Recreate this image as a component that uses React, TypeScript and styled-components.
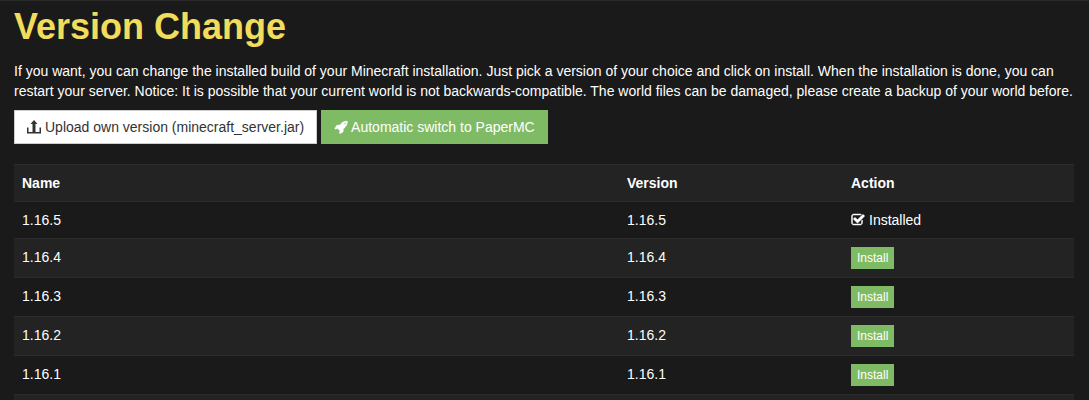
import React from 'react'
import styled, { createGlobalStyle } from 'styled-components'

const GlobalStyle = createGlobalStyle`
  html, body {
    margin: 0;
    height: 400px;
    overflow: hidden;
    background: #1a1a1a;
  }
`;

const Page = styled.div`
  box-sizing: border-box;
  height: 400px;
  overflow: hidden;
  padding: 0 15px 0 14px;
  border-top: 1px solid #2a2a2a;
  font-family: "Liberation Sans", Arial, sans-serif;
  font-size: 14px;
  line-height: 20px;
  color: #fff;
`;

const Title = styled.h1`
  margin: 6px 0 14px;
  font-size: 36px;
  line-height: 40px;
  font-weight: 700;
  color: #f1dc5c;
`;

const Intro = styled.p`
  margin: 0 0 9px;
  line-height: 20px;
`;

const Actions = styled.div`
  display: flex;
  gap: 4px;
  margin-bottom: 20px;
`;

const Button = styled.button<{ $primary?: boolean }>`
  display: flex;
  align-items: center;
  gap: 3px;
  height: 34px;
  padding: 0 12px;
  border: 1px solid ${(p) => (p.$primary ? '#7fbb65' : '#ccc')};
  background: ${(p) => (p.$primary ? '#7fbb65' : '#fff')};
  color: ${(p) => (p.$primary ? '#fff' : '#333')};
  font: inherit;
  cursor: pointer;
`;

const Table = styled.table`
  width: 1060px;
  table-layout: fixed;
  border-collapse: collapse;
`;

const HeadRow = styled.tr`
  background: #232323;
`;

const Row = styled.tr`
  &:nth-child(even) {
    background: #232323;
  }
`;

const HeadCell = styled.th<{ $width?: number }>`
  width: ${(p) => (p.$width ? `${p.$width}px` : 'auto')};
  height: 36px;
  padding: 8px;
  box-sizing: border-box;
  border-top: 1px solid #2c2c2c;
  border-bottom: 1px solid #2c2c2c;
  text-align: left;
  font-weight: 700;
`;

const Cell = styled.td`
  height: 20px;
  padding: 8px;
  border-top: 1px solid #2c2c2c;
  vertical-align: top;
`;

const Status = styled.span`
  display: flex;
  align-items: center;
  gap: 4px;
`;

const InstallButton = styled.button`
  display: block;
  height: 22px;
  padding: 0 6px;
  border: 0;
  background: #7fbb65;
  color: #fff;
  font-family: inherit;
  font-size: 12px;
  line-height: 22px;
  cursor: pointer;
`;

function UploadIcon() {
  return (
    <svg width="15" height="14" viewBox="0 0 15 14" fill="#333">
      <path d="M7 0 L10.500 4 H8.500 V12 H5.500 V4 H3.500 Z" />
      <path d="M0 7.500 H1.500 V12 H12.500 V7.500 H14 V13.500 H0 Z" />
    </svg>
  );
}

function RocketIcon() {
  return (
    <svg width="14" height="14" viewBox="0 0 1792 1792" fill="#fff" stroke="#fff" strokeWidth="40">
      <path d="M1504 448q0-40-28-68t-68-28-68 28-28 68 28 68 68 28 68-28 28-68zm224-288q0 249-75.500 430.500t-253.500 360.500q-81 80-195 176l-20 379q-2 16-16 26l-384 224q-7 4-16 4-12 0-23-9l-64-64q-13-14-8-32l85-276-281-281-276 85q-3 1-9 1-14 0-23-9l-64-64q-17-19-5-39l224-384q10-14 26-16l379-20q96-114 176-195 188-187 358-258t431-71q14 0 24 9.500t10 22.500z" />
    </svg>
  );
}

function CheckIcon() {
  return (
    <svg width="14" height="14" viewBox="0 0 1792 1792" fill="#fff" stroke="#fff" strokeWidth="60">
      <path d="M1472 930v318q0 119-84.500 203.500t-203.500 84.500h-832q-119 0-203.500-84.500t-84.500-203.500v-832q0-119 84.500-203.500t203.500-84.500h832q63 0 117 25 15 7 18 23 3 17-9 29l-49 49q-10 10-23 10-3 0-9-2-23-6-45-6h-832q-66 0-113 47t-47 113v832q0 66 47 113t113 47h832q66 0 113-47t47-113v-254q0-13 9-22l64-64q10-10 23-10 6 0 12 3 20 8 20 29zm231-489l-814 814q-24 24-57 24t-57-24l-430-430q-24-24-24-57t24-57l110-110q24-24 57-24t57 24l263 263 647-647q24-24 57-24t57 24l110 110q24 24 24 57t-24 57z" />
    </svg>
  );
}

const versions = ['1.16.5', '1.16.4', '1.16.3', '1.16.2', '1.16.1'];

function App() {
  return (
    <Page>
      <GlobalStyle />
      <Title>Version Change</Title>
      <Intro>
        If you want, you can change the installed build of your Minecraft installation. Just pick a version of your
        choice and click on install. When the installation is done, you can restart your server. Notice: It is possible
        that your current world is not backwards-compatible. The world files can be damaged, please create a backup of
        your world before.
      </Intro>
      <Actions>
        <Button>
          <UploadIcon />
          Upload own version (minecraft_server.jar)
        </Button>
        <Button $primary>
          <RocketIcon />
          Automatic switch to PaperMC
        </Button>
      </Actions>
      <Table>
        <thead>
          <HeadRow>
            <HeadCell $width={605}>Name</HeadCell>
            <HeadCell $width={224}>Version</HeadCell>
            <HeadCell>Action</HeadCell>
          </HeadRow>
        </thead>
        <tbody>
          {versions.map((version, i) => (
            <Row key={version}>
              <Cell>{version}</Cell>
              <Cell>{version}</Cell>
              <Cell>
                {i === 0 ? (
                  <Status>
                    <CheckIcon />
                    Installed
                  </Status>
                ) : (
                  <InstallButton>Install</InstallButton>
                )}
              </Cell>
            </Row>
          ))}
          <Row>
            <Cell colSpan={3} />
          </Row>
        </tbody>
      </Table>
    </Page>
  );
}

export default App
